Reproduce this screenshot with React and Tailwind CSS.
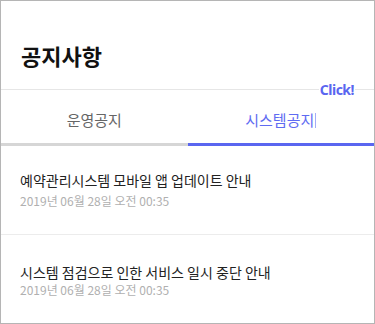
import React from "react";

const items = [
  { title: "예약관리시스템 모바일 앱 업데이트 안내", date: "2019년 06월 28일 오전 00:35", pad: "pt-[24px]", gap: "mt-[3px]", border: "border-b border-[#ececec]" },
  { title: "시스템 점검으로 인한 서비스 일시 중단 안내", date: "2019년 06월 28일 오전 00:35", pad: "pt-[27px]", gap: "mt-0", border: "" },
];

export default function App() {
  return (
    <div className="w-[375px] h-[324px] bg-white border border-[#b5b5b5] flex flex-col overflow-hidden font-['Noto_Sans_CJK_KR',sans-serif]">
      <header className="relative h-[89px] shrink-0 border-b border-[#e6e6e6] pl-[20px] pt-[39px]">
        <h1 className="text-[22px] leading-[30px] font-bold text-[#111]">공지사항</h1>
        <span className="absolute right-[19px] bottom-[-9px] bg-white px-[1px] text-[14px] leading-[17px] font-bold tracking-[-0.5px] text-[#5a66f0] font-['Noto_Sans',sans-serif]">
          Click!
        </span>
      </header>
      <nav className="flex h-[56px] shrink-0">
        <button className="flex-1 border-b-[3px] border-[#d6d6d6] pt-[20px] text-[15px] leading-[20px] text-[#666] self-stretch flex justify-center items-start">
          운영공지
        </button>
        <button className="flex-1 border-b-[3px] border-[#5a66f0] pt-[20px] text-[15px] leading-[20px] text-[#5f6bf2] flex justify-center items-start">
          <span className="flex items-center">
            시스템공지
            <span className="ml-[1px] inline-block w-px h-[15px] bg-[#a4acf8]" />
          </span>
        </button>
      </nav>
      <ul className="flex flex-col">
        {items.map((it, i) => (
          <li key={i} className={`h-[89px] pl-[19px] ${it.pad} ${it.border}`}>
            <p className="text-[14px] leading-[20px] text-[#222]">{it.title}</p>
            <p className={`text-[12px] leading-[16px] text-[#b0b0b0] ${it.gap}`}>{it.date}</p>
          </li>
        ))}
      </ul>
    </div>
  );
}
